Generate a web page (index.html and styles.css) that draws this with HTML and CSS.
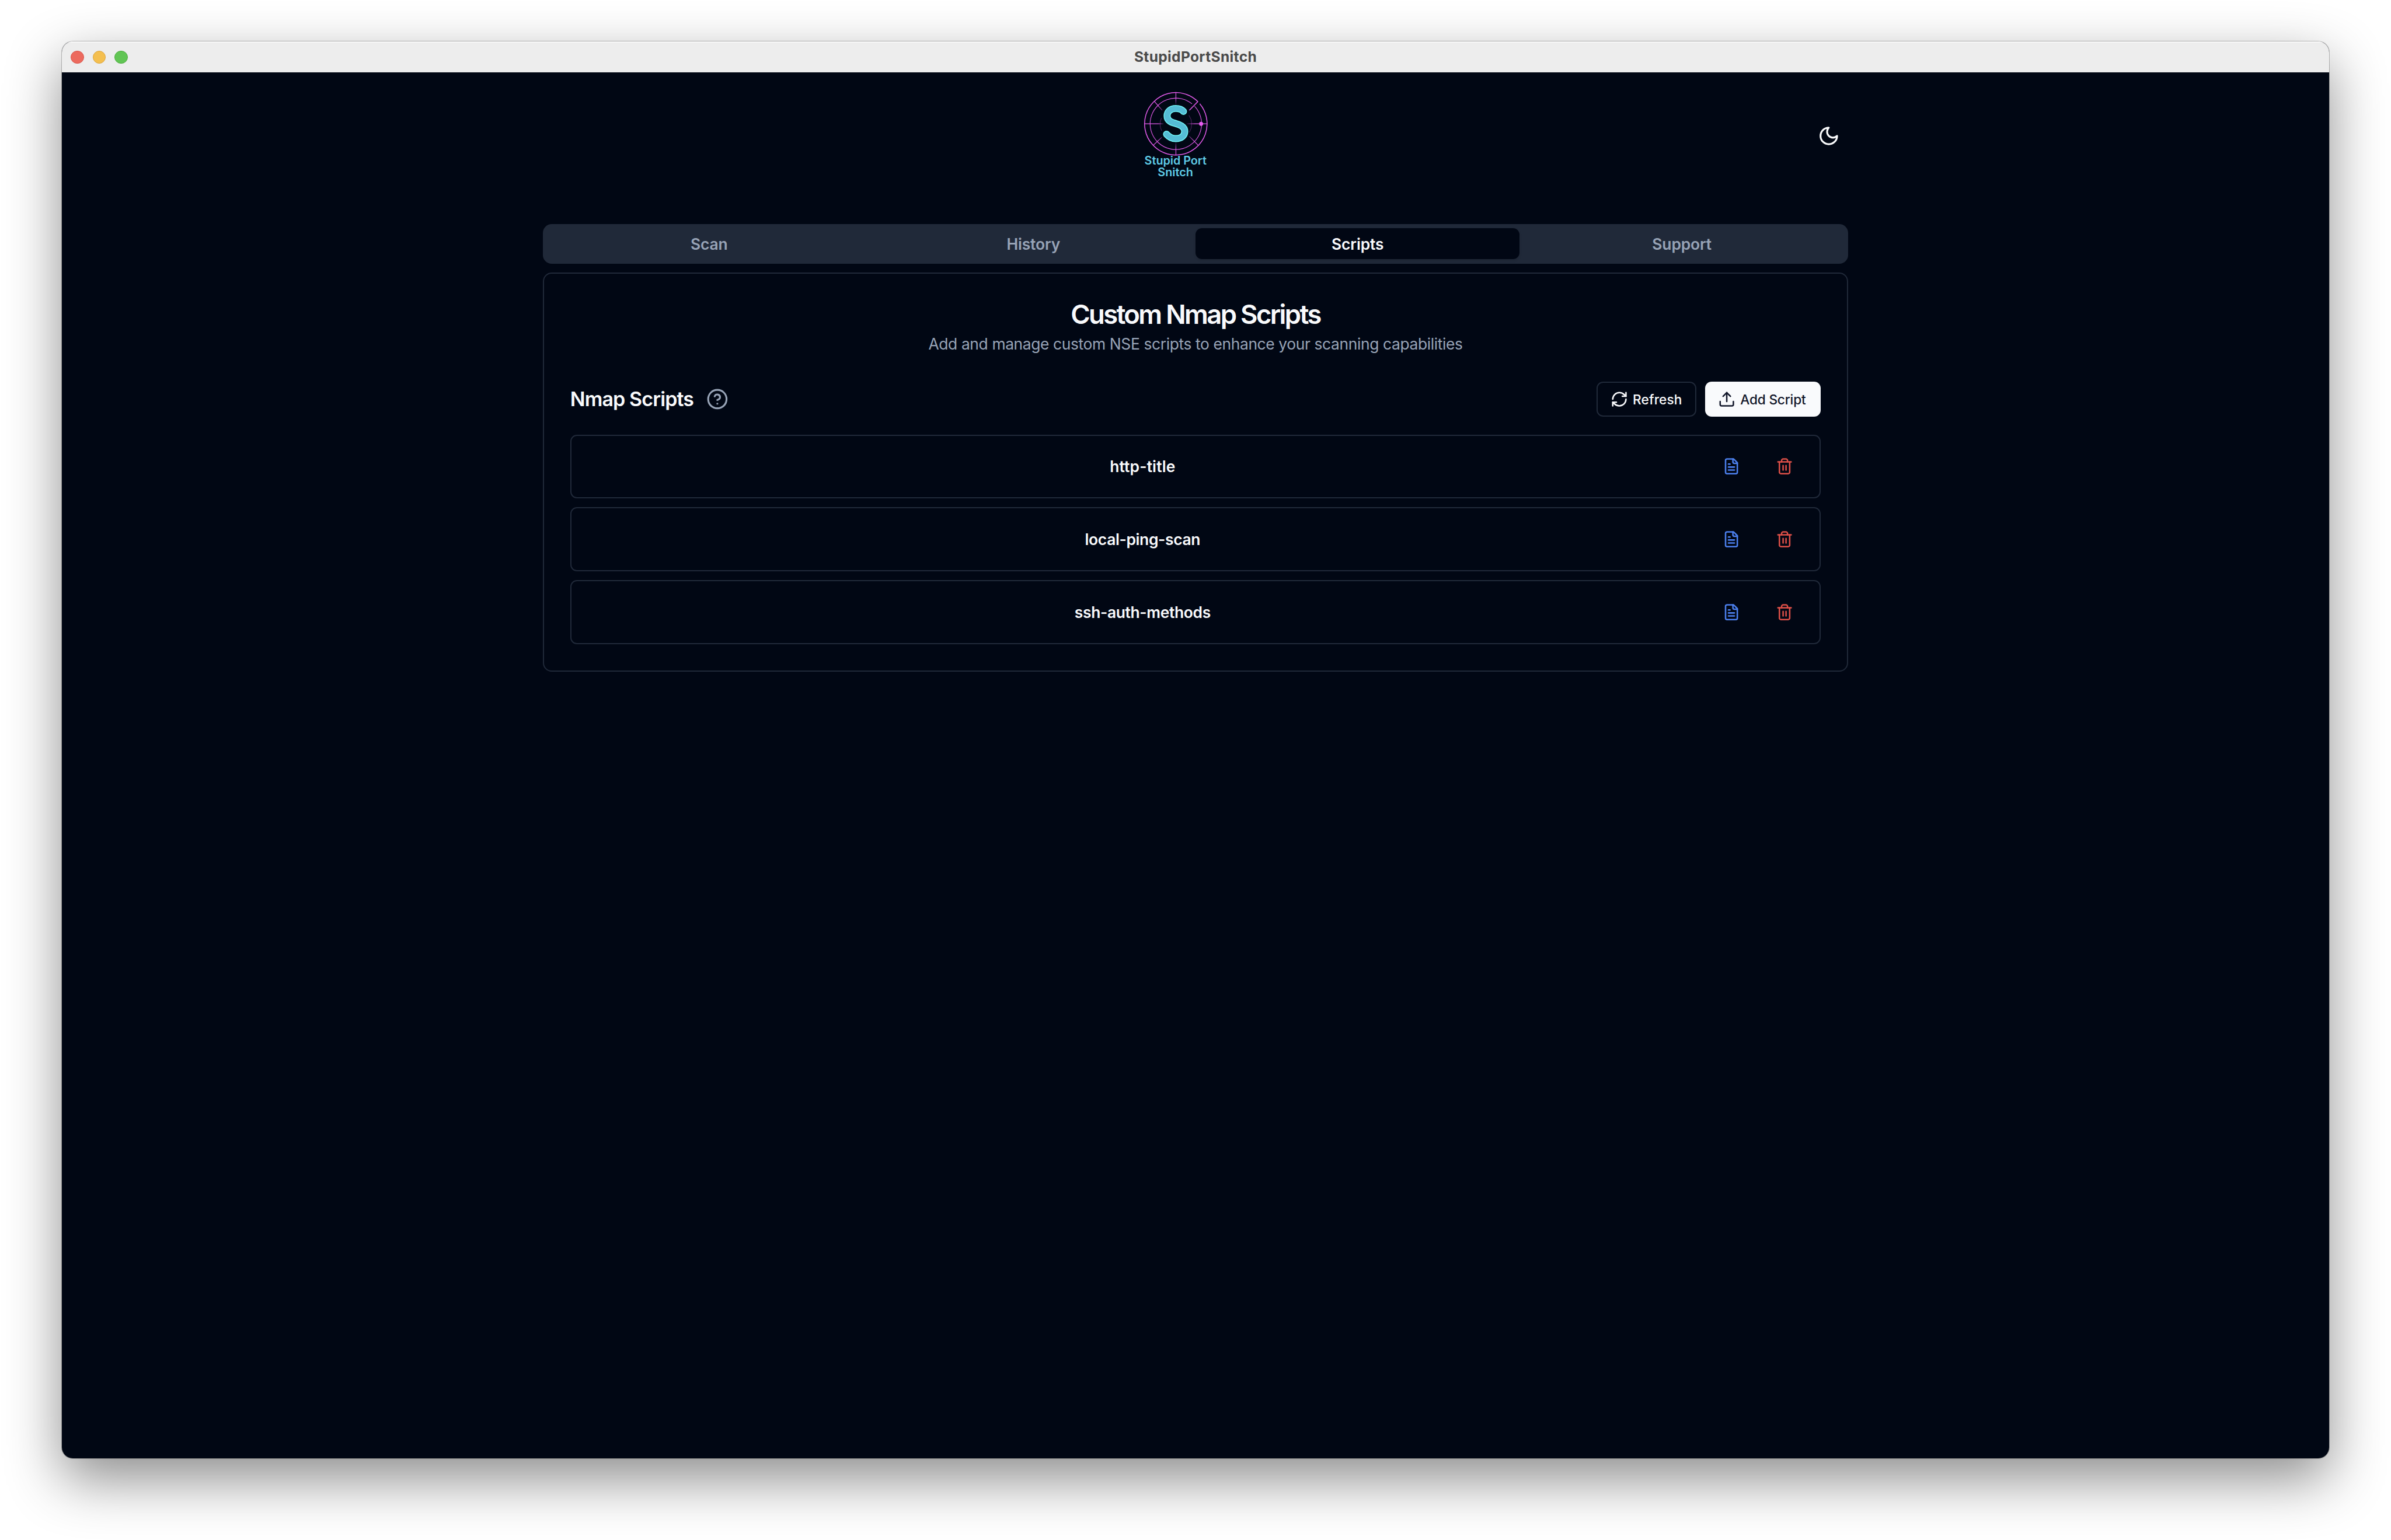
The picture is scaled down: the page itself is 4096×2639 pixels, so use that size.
FILE: index.html
```
<!DOCTYPE html>
<html lang="en">
<head>
<meta charset="utf-8">
<title>StupidPortSnitch</title>
<link rel="stylesheet" href="styles.css">
</head>
<body>
<svg class="defs" aria-hidden="true">
  <symbol id="file" viewBox="0 0 24 24"><path d="M15 2H6a2 2 0 0 0-2 2v16a2 2 0 0 0 2 2h12a2 2 0 0 0 2-2V7Z"/><path d="M14 2v4a2 2 0 0 0 2 2h4"/><path d="M10 9H8"/><path d="M16 13H8"/><path d="M16 17H8"/></symbol>
  <symbol id="trash" viewBox="0 0 24 24"><path d="M3 6h18"/><path d="M19 6v14c0 1-1 2-2 2H7c-1 0-2-1-2-2V6"/><path d="M8 6V4c0-1 1-2 2-2h4c1 0 2 1 2 2v2"/><path d="M10 11v6"/><path d="M14 11v6"/></symbol>
</svg>
<div class="window">
  <div class="titlebar">
    <div class="lights"><span class="light light-close"></span><span class="light light-min"></span><span class="light light-max"></span></div>
    <div class="window-title">StupidPortSnitch</div>
  </div>
  <main class="app">
    <header class="header">
      <div class="brand">
        <svg class="logo" viewBox="36 72 420 492" role="img" aria-label="Stupid Port Snitch">
          <defs>
            <linearGradient id="fadeR" gradientUnits="userSpaceOnUse" x1="300" y1="0" x2="350" y2="0"><stop offset="0" stop-color="#e85cf0" stop-opacity="0"/><stop offset="1" stop-color="#e85cf0"/></linearGradient>
            <linearGradient id="fadeL" gradientUnits="userSpaceOnUse" x1="185" y1="0" x2="150" y2="0"><stop offset="0" stop-color="#e85cf0" stop-opacity="0"/><stop offset="1" stop-color="#e85cf0"/></linearGradient>
            <linearGradient id="fadeT" gradientUnits="userSpaceOnUse" x1="0" y1="152" x2="0" y2="115"><stop offset="0" stop-color="#e85cf0" stop-opacity="0"/><stop offset="1" stop-color="#e85cf0"/></linearGradient>
            <linearGradient id="fadeB" gradientUnits="userSpaceOnUse" x1="0" y1="352" x2="0" y2="390"><stop offset="0" stop-color="#e85cf0" stop-opacity="0"/><stop offset="1" stop-color="#e85cf0"/></linearGradient>
          </defs>
          <g class="radar">
            <path class="ring" d="M376.700 144.200A170 170 0 1 1 366.700 133.300"/>
            <path d="M348.900 158A140 140 0 1 1 334.600 144.700"/>
            <path class="ring" d="M367 132L320 180"/>
            <path d="M77 253.500L180 253.600" stroke="url(#fadeL)"/>
            <path d="M305 253.500L416 253.600" stroke="url(#fadeR)"/>
            <path d="M247 85L247.100 150" stroke="url(#fadeT)"/>
            <path d="M247 354L247.100 423" stroke="url(#fadeB)"/>
            <path d="M130 132L173 180" stroke="url(#fadeL)"/>
            <path d="M123 371L170 327" stroke="url(#fadeL)"/>
            <path d="M369 371L320 322" stroke="url(#fadeR)"/>
            <path class="inner" d="M168 222A85 85 0 0 0 169 291M318 207A85 85 0 0 1 320 300"/>
            <circle class="blip" cx="384" cy="254" r="11"/>
          </g>
          <g class="mark">
            <path class="mark-edge" d="M288 186C278 174 264 170 246 170C218 170 199 187 199 210C199 239 225 246 246 252C272 259 295 270 295 294C295 318 276 334 246 334C224 334 211 327 196 310"/>
            <path class="mark-fill" d="M288 186C278 174 264 170 246 170C218 170 199 187 199 210C199 239 225 246 246 252C272 259 295 270 295 294C295 318 276 334 246 334C224 334 211 327 196 310"/>
          </g>
          <text class="brand-text" x="76" y="475" textLength="338" lengthAdjust="spacingAndGlyphs">Stupid Port</text>
          <text class="brand-text" x="148" y="539" textLength="193" lengthAdjust="spacingAndGlyphs">Snitch</text>
        </svg>
      </div>
      <button class="theme" aria-label="Toggle theme"><svg class="icon icon-lg" viewBox="0 0 24 24"><path d="M12 3a6 6 0 0 0 9 9 9 9 0 1 1-9-9Z"/></svg></button>
    </header>

    <nav class="tabs">
      <button class="tab">Scan</button>
      <button class="tab">History</button>
      <button class="tab tab-active">Scripts</button>
      <button class="tab">Support</button>
    </nav>

    <section class="panel">
      <h1 class="panel-title">Custom Nmap Scripts</h1>
      <p class="panel-sub">Add and manage custom NSE scripts to enhance your scanning capabilities</p>
      <div class="toolbar">
        <h2 class="toolbar-title">Nmap Scripts</h2>
        <svg class="icon icon-lg help" viewBox="0 0 24 24"><circle cx="12" cy="12" r="10"/><path d="M9.090 9a3 3 0 0 1 5.830 1c0 2-3 3-3 3"/><path d="M12 17h.010"/></svg>
        <div class="actions">
          <button class="btn btn-outline"><svg class="icon" viewBox="0 0 24 24"><path d="M3 12a9 9 0 0 1 9-9 9.750 9.750 0 0 1 6.740 2.740L21 8"/><path d="M21 3v5h-5"/><path d="M21 12a9 9 0 0 1-9 9 9.750 9.750 0 0 1-6.740-2.740L3 16"/><path d="M8 16H3v5"/></svg>Refresh</button>
          <button class="btn btn-solid"><svg class="icon" viewBox="0 0 24 24"><path d="M21 15v4a2 2 0 0 1-2 2H5a2 2 0 0 1-2-2v-4"/><path d="M17 8l-5-5-5 5"/><path d="M12 3v12"/></svg>Add Script</button>
        </div>
      </div>
      <ul class="scripts">
        <li class="script"><span class="script-name script-name-wide">http-title</span><button class="act act-view" aria-label="View"><svg class="icon"><use href="#file"/></svg></button><button class="act act-delete" aria-label="Delete"><svg class="icon"><use href="#trash"/></svg></button></li>
        <li class="script"><span class="script-name">local-ping-scan</span><button class="act act-view" aria-label="View"><svg class="icon"><use href="#file"/></svg></button><button class="act act-delete" aria-label="Delete"><svg class="icon"><use href="#trash"/></svg></button></li>
        <li class="script"><span class="script-name">ssh-auth-methods</span><button class="act act-view" aria-label="View"><svg class="icon"><use href="#file"/></svg></button><button class="act act-delete" aria-label="Delete"><svg class="icon"><use href="#trash"/></svg></button></li>
      </ul>
    </section>
  </main>
</div>
</body>
</html>
```
FILE: styles.css
```
:root {
  font-size: 18.893px;
  --bg: #010714;
  --line: #202939;
  --muted: #97a3b6;
  --fg: #f9fafc;
}

* { box-sizing: border-box; margin: 0; padding: 0; }

html { overflow: hidden; background: #fff; }

body {
  height: 100vh;
  padding: 3.78rem 5.6rem 7.4rem;
  overflow: hidden;
  background: #fff;
  font-family: Inter, "Liberation Sans", sans-serif;
  color: var(--fg);
}

button { border: 0; background: none; color: inherit; font: inherit; letter-spacing: inherit; }

.defs { display: none; }

.window {
  display: flex;
  flex-direction: column;
  height: 128.5rem;
  border-radius: 1rem;
  overflow: hidden;
  background: var(--bg);
  box-shadow: 0 0 0 1px rgba(0, 0, 0, .24), 0 1.9rem 5rem rgba(0, 0, 0, .45);
}

.titlebar {
  display: grid;
  grid-template-columns: 1fr auto 1fr;
  align-items: center;
  height: 2.8rem;
  padding-left: .8rem;
  background: #ededed;
  box-shadow: inset 0 2px 0 #f8f8f8;
}

.lights { display: flex; gap: .8rem; }
.light { width: 1.2rem; height: 1.2rem; border-radius: 50%; border: 1px solid; }
.light-close { background: #ec6a5e; border-color: #d9544b; }
.light-min { background: #f4bf4f; border-color: #dba53c; }
.light-max { background: #61c554; border-color: #4dac3e; }

.window-title {
  margin-right: .8rem;
  font-size: 1.3rem;
  line-height: 1.5rem;
  padding-bottom: .1rem;
  font-weight: 700;
  letter-spacing: .0139em;
  color: #4a4a4a;
}

.app { width: 118.4rem; margin: 0 auto; padding-top: 1.63rem; }

.header { display: flex; align-items: center; height: 8.2rem; margin-bottom: 3.9rem; }
.brand { flex: 1; display: flex; justify-content: center; }
.logo { width: 7rem; height: 8.2rem; }
.radar { fill: none; stroke: #e05ae8; stroke-width: 3.6; }
.radar .ring { stroke-width: 4.8; }
.radar .inner { stroke-width: 3; opacity: .4; }
.radar .blip { fill: #e85cf0; stroke: none; }
.mark { fill: none; stroke-linecap: round; stroke-linejoin: round; }
.mark-edge { stroke: #6ff1f3; stroke-width: 38; }
.mark-fill { stroke: #55bcd5; stroke-width: 28; }
.brand-text { font: 600 62px Inter, sans-serif; fill: #5fcbe6; }

.theme { display: flex; align-items: center; justify-content: center; width: 3.6rem; height: 3.6rem; }

.icon {
  flex: none;
  width: 1.6rem;
  height: 1.6rem;
  fill: none;
  stroke: currentColor;
  stroke-width: 2;
  stroke-linecap: round;
  stroke-linejoin: round;
}
.icon-lg { width: 2rem; height: 2rem; }

.tabs {
  display: grid;
  grid-template-columns: repeat(4, 1fr);
  height: 3.6rem;
  padding: .4rem;
  border-radius: .8rem;
  background: var(--line);
  color: var(--muted);
  font-size: 1.4rem;
  font-weight: 560;
  letter-spacing: -.006em;
}
.tab { border-radius: .6rem; }
.tab-active {
  background: var(--bg);
  color: var(--fg);
  letter-spacing: -.004em;
  box-shadow: 0 2px 4px rgba(0, 0, 0, .12);
}

.panel {
  margin-top: .8rem;
  padding: 2.4rem;
  border: 2px solid var(--line);
  border-radius: .8rem;
}

.panel-title {
  margin-bottom: -.08rem;
  padding-top: .08rem;
  font-size: 2.4rem;
  line-height: 1;
  font-weight: 620;
  letter-spacing: -.058em;
  text-align: center;
}
.panel-sub {
  margin-top: .6rem;
  font-size: 1.4rem;
  line-height: 2rem;
  font-weight: 420;
  letter-spacing: -.0152em;
  text-align: center;
  color: var(--muted);
}

.toolbar { display: flex; align-items: center; height: 3.2rem; margin-top: 2.4rem; }
.toolbar-title {
  padding-top: .08rem;
  font-size: 1.8rem;
  line-height: 2.8rem;
  font-weight: 580;
  letter-spacing: -.0265em;
}
.help { margin-left: 1.17rem; color: var(--muted); }

.actions { display: flex; gap: .8rem; height: 100%; margin-left: auto; }
.btn {
  display: flex;
  align-items: center;
  gap: .4rem;
  padding: 0 1.2rem;
  border-radius: .6rem;
  font-size: 1.2rem;
  font-weight: 540;
}
.btn-outline { width: 9.05rem; border: 2px solid var(--line); letter-spacing: .004em; }
.btn-solid { width: 10.5rem; background: var(--fg); color: #12172a; white-space: nowrap; letter-spacing: -.008em; }

.scripts { display: flex; flex-direction: column; gap: .8rem; margin-top: 1.6rem; list-style: none; }
.script {
  display: flex;
  align-items: center;
  gap: .8rem;
  height: 5.8rem;
  padding: 0 1.2rem;
  border: 2px solid var(--line);
  border-radius: .6rem;
}
.script-name {
  flex: 1;
  font-size: 1.4rem;
  font-weight: 580;
  letter-spacing: -.014em;
  text-align: center;
}
.script-name-wide { letter-spacing: .005em; }
.act { display: flex; align-items: center; justify-content: center; width: 4rem; height: 3.2rem; }
.act-view { color: #4c80ee; }
.act-delete { color: #de5048; }
```
